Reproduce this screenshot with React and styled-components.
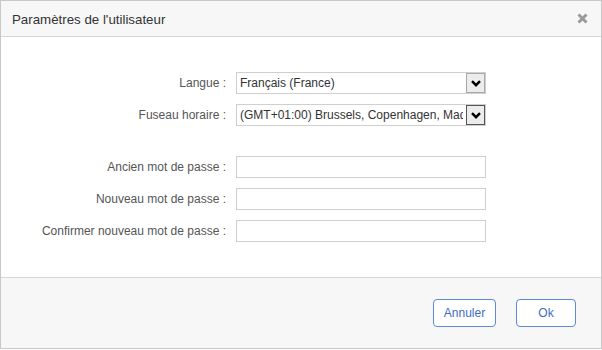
import styled, { createGlobalStyle } from 'styled-components';

const GlobalStyle = createGlobalStyle`
  body {
    margin: 0;
    background: #ffffff;
    font-family: Arial, "Liberation Sans", sans-serif;
  }
`;

const Dialog = styled.div`
  width: 602px;
  height: 349px;
  box-sizing: border-box;
  border: 1px solid #c8c8c8;
  display: flex;
  flex-direction: column;
  background: #fff;
`;

const Header = styled.div`
  height: 35px;
  background: #f7f7f7;
  border-bottom: 1px solid #d6d6d6;
  display: flex;
  align-items: center;
  justify-content: space-between;
  padding: 0 12px 0 11px;
`;

const Title = styled.div`
  font-size: 13.3px;
  color: #333;
  padding-top: 1px;
`;

const Close = styled.button`
  border: none;
  background: none;
  padding: 0;
  width: 12px;
  height: 12px;
  display: flex;
  cursor: pointer;
`;

const Body = styled.div`
  flex: 1;
  padding-top: 35px;
  display: flex;
  flex-direction: column;
  gap: 10px;
`;

const Row = styled.div`
  display: grid;
  grid-template-columns: 225px 250px;
  column-gap: 10px;
  align-items: center;
  margin-top: ${(p) => (p.$spaced ? '20px' : '0')};
`;

const Label = styled.label`
  font-size: 12px;
  color: #555;
  text-align: right;
`;

const SelectWrap = styled.div`
  position: relative;
  height: 22px;
`;

const Select = styled.select`
  appearance: none;
  width: 100%;
  height: 22px;
  box-sizing: border-box;
  border: 1px solid #cfcfcf;
  border-radius: 0;
  background: #fff;
  font-family: Arial, "Liberation Sans", sans-serif;
  font-size: 12px;
  color: #333;
  padding: 0 22px 0 3px;
  outline: none;
`;

const Arrow = styled.span`
  position: absolute;
  top: 1px;
  right: 1px;
  width: 19px;
  height: 20px;
  box-sizing: border-box;
  border: 1px solid ${(p) => (p.$dark ? '#555' : '#a8a8a8')};
  background: #ececec;
  display: flex;
  align-items: center;
  justify-content: center;
  pointer-events: none;
`;

const Input = styled.input`
  width: 100%;
  height: 22px;
  box-sizing: border-box;
  border: 1px solid #cfcfcf;
  padding: 0 4px;
  font-size: 12px;
  outline: none;
`;

const Footer = styled.div`
  height: 70px;
  background: #f7f7f7;
  border-top: 1px solid #d6d6d6;
  display: flex;
  align-items: center;
  justify-content: flex-end;
  gap: 20px;
  padding: 0 25px 0 0;
`;

const Button = styled.button`
  height: 28px;
  width: ${(p) => p.$w}px;
  box-sizing: border-box;
  border: 1px solid #5b8ad6;
  border-radius: 4px;
  background: #fff;
  color: #3e6cc0;
  font-family: Arial, "Liberation Sans", sans-serif;
  font-size: 12px;
  cursor: pointer;
`;

function Chevron() {
  return (
    <svg width="10" height="7" viewBox="0 0 10 7">
      <path d="M1 1.2 L5 5.2 L9 1.2" fill="none" stroke="#000" strokeWidth="2.4" />
    </svg>
  );
}

function SelectField({ value, dark }) {
  return (
    <SelectWrap>
      <Select defaultValue={value}>
        <option>{value}</option>
      </Select>
      <Arrow $dark={dark}>
        <Chevron />
      </Arrow>
    </SelectWrap>
  );
}

export default function App() {
  return (
    <>
      <GlobalStyle />
      <Dialog>
        <Header>
          <Title>Paramètres de l'utilisateur</Title>
          <Close aria-label="Fermer">
            <svg width="11" height="11" viewBox="0 0 11 11">
              <path d="M1.5 1.5 L9.5 9.5 M9.5 1.5 L1.5 9.5" stroke="#9a9a9a" strokeWidth="3" />
            </svg>
          </Close>
        </Header>
        <Body>
          <Row>
            <Label>Langue :</Label>
            <SelectField value="Français (France)" />
          </Row>
          <Row>
            <Label>Fuseau horaire :</Label>
            <SelectField value="(GMT+01:00) Brussels, Copenhagen, Madrid, Paris" dark />
          </Row>
          <Row $spaced>
            <Label>Ancien mot de passe :</Label>
            <Input type="password" />
          </Row>
          <Row>
            <Label>Nouveau mot de passe :</Label>
            <Input type="password" />
          </Row>
          <Row>
            <Label>Confirmer nouveau mot de passe :</Label>
            <Input type="password" />
          </Row>
        </Body>
        <Footer>
          <Button $w={63}>Annuler</Button>
          <Button $w={60}>Ok</Button>
        </Footer>
      </Dialog>
    </>
  );
}
